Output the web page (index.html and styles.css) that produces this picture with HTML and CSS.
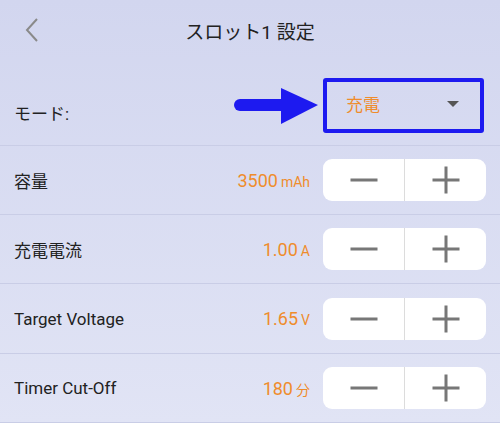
FILE: index.html
```html
<!DOCTYPE html>
<html lang="ja">
<head>
  <meta charset="UTF-8" />
  <title>スロット1 設定</title>
  <link rel="stylesheet" href="styles.css">
</head>
<body>
  <div class="screen">
    <header class="topbar">
      <button class="back" aria-label="戻る">
        <svg width="14" height="24" viewBox="0 0 14 24"><polyline points="12,1 2,12 12,23" fill="none" stroke="#8a8a8a" stroke-width="2"/></svg>
      </button>
      <h1>スロット1 設定</h1>
      <span></span>
    </header>

    <div class="mode-row">
      <span class="mode-label">モード:</span>
      <svg class="pointer" width="88" height="40" viewBox="0 0 88 40">
        <line x1="8" y1="19" x2="54" y2="19" stroke="#1d1af0" stroke-width="12" stroke-linecap="round"/>
        <polygon points="49,2 86,19 49,38" fill="#1d1af0"/>
      </svg>
      <div class="mode-select">
        <span class="mode-value">充電</span>
        <span class="caret"></span>
      </div>
    </div>

    <div class="setting">
      <span class="label">容量</span>
      <span class="value">3500<small>mAh</small></span>
      <div class="stepper"><button class="minus"></button><button class="plus"></button></div>
    </div>
    <div class="setting">
      <span class="label">充電電流</span>
      <span class="value">1.00<small>A</small></span>
      <div class="stepper"><button class="minus"></button><button class="plus"></button></div>
    </div>
    <div class="setting">
      <span class="label">Target Voltage</span>
      <span class="value">1.65<small>V</small></span>
      <div class="stepper"><button class="minus"></button><button class="plus"></button></div>
    </div>
    <div class="setting">
      <span class="label">Timer Cut-Off</span>
      <span class="value">180<small>分</small></span>
      <div class="stepper"><button class="minus"></button><button class="plus"></button></div>
    </div>
  </div>
</body>
</html>
```

FILE: styles.css
```css
body {
  margin: 0;
  font-family: Roboto, "Noto Sans CJK JP", sans-serif;
  color: #222;
}
.screen {
  width: 500px;
  height: 423px;
  overflow: hidden;
  background: linear-gradient(#d2d6ef, #e1e4f5);
}
.topbar {
  height: 62px;
  display: grid;
  grid-template-columns: 60px 1fr 60px;
  align-items: center;
}
.back {
  background: none;
  border: none;
  padding: 0;
  margin: 0 0 0 25px;
  width: 14px;
  height: 24px;
  display: flex;
  margin-top: -2px;
}
h1 {
  margin: 0;
  text-align: center;
  font-size: 19px;
  font-weight: 400;
  margin-top: -2px;
}
.mode-row {
  height: 83px;
  display: flex;
  align-items: flex-start;
  padding: 0 16px 0 14px;
  border-bottom: 1px solid #c9cde6;
}
.mode-label {
  flex: 1;
  font-size: 17px;
  line-height: 20px;
  margin-top: 42px;
}
.pointer {
  margin-top: 24px;
  margin-right: 3px;
}
.mode-select {
  box-sizing: border-box;
  width: 161px;
  height: 55px;
  margin-top: 16px;
  border: 4px solid #1d1af0;
  border-radius: 3px;
  display: flex;
  align-items: center;
  justify-content: space-between;
  padding: 0 21px 4px 19px;
}
.mode-value {
  color: #ef8c2c;
  font-size: 17px;
}
.caret {
  width: 0;
  height: 0;
  border-left: 6.5px solid transparent;
  border-right: 6.5px solid transparent;
  border-top: 6px solid #555;
}
.setting {
  height: 68px;
  display: flex;
  align-items: center;
  padding: 0 14px;
  border-bottom: 1px solid #c9cde6;
}
.setting:nth-of-type(4) {
  height: 69px;
}
.label {
  flex: 1;
  font-size: 17px;
}
.value {
  color: #ef8c2c;
  font-size: 18px;
  margin-right: 13px;
}
.value small {
  font-size: 14px;
  margin-left: 3px;
}
.stepper {
  width: 163px;
  height: 42px;
  background: #fff;
  border-radius: 9px;
  display: flex;
  overflow: hidden;
}
.stepper button {
  flex: 1;
  border: none;
  background: none;
  padding: 0;
  position: relative;
}
.stepper .minus {
  border-right: 1px solid #dcdcdc;
}
.minus::before,
.plus::before,
.plus::after {
  content: "";
  position: absolute;
  left: 50%;
  top: 50%;
  background: #777;
}
.minus::before,
.plus::before {
  width: 27px;
  height: 3px;
  transform: translate(-50%, -50%);
}
.plus::after {
  width: 3px;
  height: 27px;
  transform: translate(-50%, -50%);
}
```
